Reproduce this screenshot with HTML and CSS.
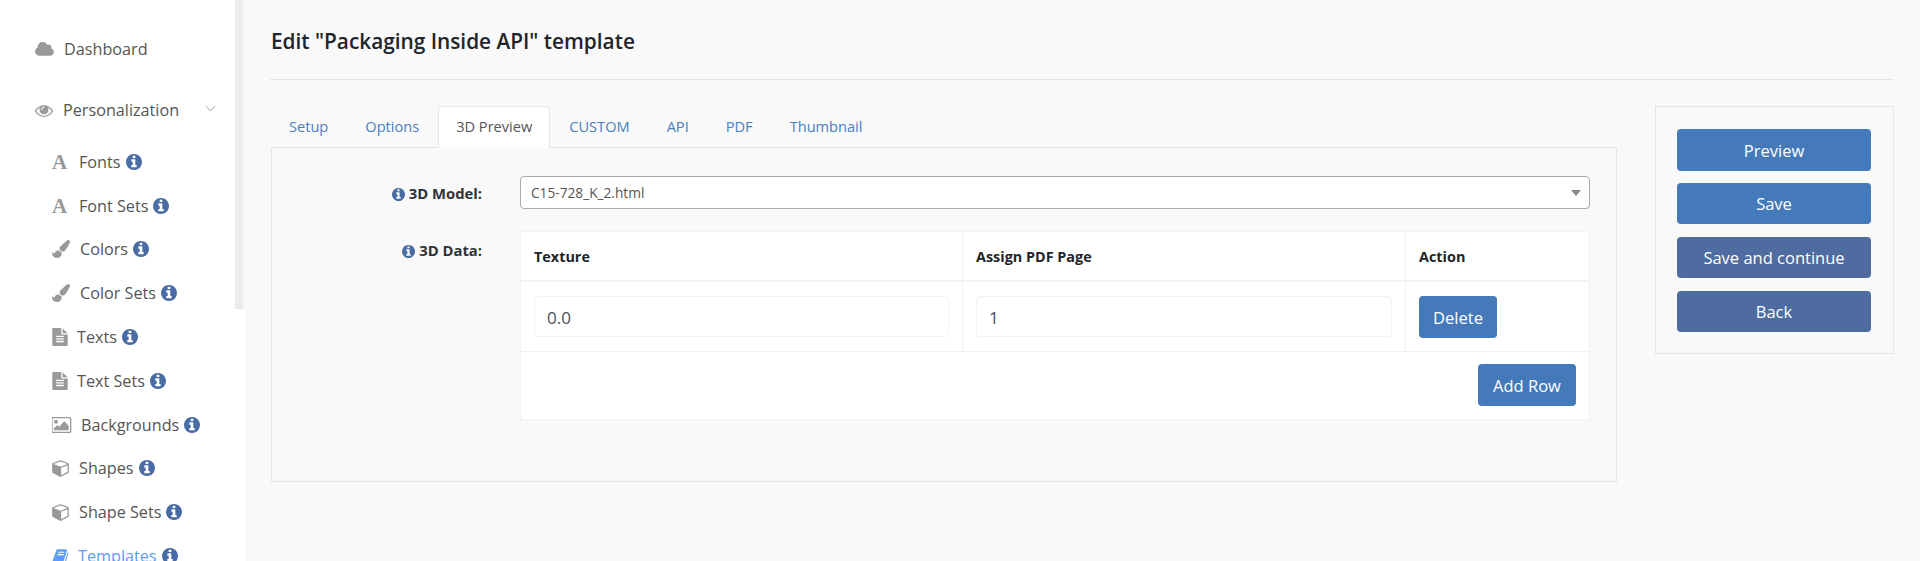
FILE: index.html
```html
<!DOCTYPE html>
<html lang="en">
<head>
<meta charset="utf-8">
<title>Edit template</title>
<link rel="stylesheet" href="styles.css">
</head>
<body>
<svg class="defs" width="0" height="0" aria-hidden="true">
  <symbol id="i-cloud" viewBox="0 128 1920 1536"><path d="M1920 1152q0 159-112.5 271.5t-271.5 112.5h-1088q-185 0-316.5-131.5t-131.5-316.5q0-132 71-241.5t187-163.5q-2-28-2-43 0-212 150-362t362-150q158 0 286.5 88t187.5 230q70-62 166-62 106 0 181 75t75 181q0 75-41 138 129 30 213 134.5t84 239.5z"/></symbol>
  <symbol id="i-eye" viewBox="0 256 1792 1280"><path d="M1664 960q-152-236-381-353 61 104 61 225 0 185-131.5 316.5t-316.5 131.5-316.5-131.5-131.5-316.5q0-121 61-225-229 117-381 353 133 205 333.5 326.5t434.5 121.5 434.5-121.5 333.5-326.5zm-720-384q0-20-14-34t-34-14q-125 0-214.5 89.5t-89.5 214.5q0 20 14 34t34 14 34-14 14-34q0-86 61-147t147-61q20 0 34-14t14-34zm848 384q0 34-20 69-140 230-376.5 368.5t-499.5 138.5-499.5-139-376.5-368q-20-35-20-69t20-69q140-229 376.5-368t499.5-139 499.5 139 376.5 368q20 35 20 69z"/></symbol>
  <symbol id="i-brush" viewBox="0 0 1792 1792"><path d="M1615 0q70 0 122.5 46.5t52.5 116.5q0 63-45 151-332 629-465 752-97 91-218 91-126 0-216.5-92.5t-90.5-219.5q0-128 92-212l638-579q59-54 130-54zm-909 1034q39 76 106.5 130t150.5 76l1 71q4 213-129.5 347t-348.5 134q-123 0-218-46.5t-152.5-127.5-86.5-183-29-220q7 5 41 30t62 44.5 59 36.5 46 17q41 0 55-37 25-66 57.5-112.5t69.5-76 88-47.5 103-25.5 125-10.5z"/></symbol>
  <symbol id="i-file" viewBox="128 0 1536 1792"><path d="M1596 476q14 14 28 36h-472v-472q22 14 36 28zm-476 164h544v1056q0 40-28 68t-68 28h-1344q-40 0-68-28t-28-68v-1600q0-40 28-68t68-28h800v544q0 40 28 68t68 28zm160 736v-64q0-14-9-23t-23-9h-704q-14 0-23 9t-9 23v64q0 14 9 23t23 9h704q14 0 23-9t9-23zm0-256v-64q0-14-9-23t-23-9h-704q-14 0-23 9t-9 23v64q0 14 9 23t23 9h704q14 0 23-9t9-23zm0-256v-64q0-14-9-23t-23-9h-704q-14 0-23 9t-9 23v64q0 14 9 23t23 9h704q14 0 23-9t9-23z"/></symbol>
  <symbol id="i-picture" viewBox="0 128 1920 1536"><path d="M576 576q0 80-56 136t-136 56-136-56-56-136 56-136 136-56 136 56 56 136zm1024 384v448h-1408v-192l320-320 160 160 512-512zm96-704h-1600q-13 0-22.5 9.5t-9.5 22.5v1216q0 13 9.5 22.5t22.5 9.5h1600q13 0 22.5-9.5t9.5-22.5v-1216q0-13-9.5-22.5t-22.5-9.5zm160 32v1216q0 66-47 113t-113 47h-1600q-66 0-113-47t-47-113v-1216q0-66 47-113t113-47h1600q66 0 113 47t47 113z"/></symbol>
  <symbol id="i-cube" viewBox="0 0 1664 1792"><path d="M896 1629l640-349v-636l-640 233v752zm-64-865l698-254-698-254-698 254zm832-252v768q0 35-18 65t-49 47l-704 384q-28 16-61 16t-61-16l-704-384q-31-17-49-47t-18-65v-768q0-40 23-73t61-49l704-256q22-8 44-8t44 8l704 256q38 16 61 49t23 73z"/></symbol>
  <symbol id="i-book" viewBox="0 128 1792 1536"><path d="M1703 478q40 57 18 129l-275 906q-19 64-76.500 107.500t-122.500 43.500h-923q-77 0-148.500-53.500t-99.500-131.500q-24-67-2-127 0-4 3-27t4-37q1-8-3-21.500t-3-19.500q2-11 8-21t16.500-23.500 16.500-23.500q23-38 45-91.500t30-91.500q3-10 .5-30t-.5-28q3-11 17-28t17-23q21-36 42-92t25-90q1-9-2.500-32t.5-28q4-13 22-30.500t22-22.500q19-26 42.500-84.500t27.500-96.500q1-8-3-25.500t-2-26.500q2-8 9-18t18-23 17-21q8-12 16.500-30.500t15-35 16-36 19.500-32 26.500-23.500 36-11.500 47.500 5.500l-1 3q38-9 51-9h761q74 0 114 56t18 130l-274 906q-36 119-71.500 153.500t-128.500 34.500h-869q-27 0-38 15-11 16-1 43 24 70 144 70h923q29 0 56-15.500t35-41.500l300-987q7-22 5-57 38 15 59 43zm-1064 2q-4 13 2 22.500t20 9.500h608q13 0 25.500-9.500t16.500-22.500l21-64q4-13-2-22.500t-20-9.500h-608q-13 0-25.500 9.500t-16.500 22.500zm-83 256q-4 13 2 22.500t20 9.500h608q13 0 25.500-9.500t16.500-22.500l21-64q4-13-2-22.500t-20-9.500h-608q-13 0-25.500 9.500t-16.500 22.500z"/></symbol>
  <symbol id="i-info" viewBox="128 128 1536 1536"><path d="M1152 1376v-160q0-14-9-23t-23-9h-96v-512q0-14-9-23t-23-9h-320q-14 0-23 9t-9 23v160q0 14 9 23t23 9h96v320h-96q-14 0-23 9t-9 23v160q0 14 9 23t23 9h448q14 0 23-9t9-23zm-128-896v-160q0-14-9-23t-23-9h-192q-14 0-23 9t-9 23v160q0 14 9 23t23 9h192q14 0 23-9t9-23zm640 416q0 209-103 385.500t-279.500 279.500-385.500 103-385.500-103-279.500-279.500-103-385.500 103-385.500 279.500-279.500 385.500-103 385.500 103 279.500 279.500 103 385.500z"/></symbol>
</svg>

<aside class="sidebar">
  <div class="scroll-thumb"></div>
  <a class="top-item first"><svg class="ico ico-cloud"><use href="#i-cloud"/></svg><span class="lbl-dash">Dashboard</span></a>
  <a class="top-item"><svg class="ico ico-eye"><use href="#i-eye"/></svg><span class="lbl-pers">Personalization</span>
    <svg class="chev" viewBox="0 0 12 7"><path d="M1 1l5 5 5-5"/></svg></a>
  <ul class="sub">
    <li><span class="ico ico-a">A</span><span class="t1">Fonts</span><svg class="info"><use href="#i-info"/></svg></li>
    <li><span class="ico ico-a">A</span><span class="t1">Font Sets</span><svg class="info"><use href="#i-info"/></svg></li>
    <li><svg class="ico ico-brush"><use href="#i-brush"/></svg><span class="t2">Colors</span><svg class="info"><use href="#i-info"/></svg></li>
    <li><svg class="ico ico-brush"><use href="#i-brush"/></svg><span class="t2">Color Sets</span><svg class="info"><use href="#i-info"/></svg></li>
    <li><svg class="ico ico-file"><use href="#i-file"/></svg><span class="t3">Texts</span><svg class="info"><use href="#i-info"/></svg></li>
    <li><svg class="ico ico-file"><use href="#i-file"/></svg><span class="t3">Text Sets</span><svg class="info"><use href="#i-info"/></svg></li>
    <li><svg class="ico ico-picture"><use href="#i-picture"/></svg><span class="t4">Backgrounds</span><svg class="info"><use href="#i-info"/></svg></li>
    <li><svg class="ico ico-cube"><use href="#i-cube"/></svg><span class="t2">Shapes</span><svg class="info"><use href="#i-info"/></svg></li>
    <li><svg class="ico ico-cube"><use href="#i-cube"/></svg><span class="t2">Shape Sets</span><svg class="info"><use href="#i-info"/></svg></li>
    <li class="active"><svg class="ico ico-book"><use href="#i-book"/></svg><span class="t2">Templates</span><svg class="info"><use href="#i-info"/></svg></li>
  </ul>
</aside>

<main class="main">
  <header class="page-head"><h1>Edit "Packaging Inside API" template</h1></header>
  <div class="columns">
    <section class="editor">
      <nav class="tabs">
        <a class="tab">Setup</a>
        <a class="tab">Options</a>
        <a class="tab active">3D Preview</a>
        <a class="tab">CUSTOM</a>
        <a class="tab">API</a>
        <a class="tab">PDF</a>
        <a class="tab">Thumbnail</a>
      </nav>
      <div class="tab-pane">
        <div class="form-row row-model">
          <label class="form-label"><svg class="info small"><use href="#i-info"/></svg>3D Model:</label>
          <div class="select-wrap">
            <select class="select"><option>C15-728_K_2.html</option></select>
          </div>
        </div>
        <div class="form-row row-data">
          <label class="form-label"><svg class="info small"><use href="#i-info"/></svg>3D Data:</label>
          <div class="data-table">
            <div class="grid head">
              <div class="cell c1">Texture</div>
              <div class="cell c2">Assign PDF Page</div>
              <div class="cell c3">Action</div>
            </div>
            <div class="grid body">
              <div class="cell c1"><input class="input" value="0.0"></div>
              <div class="cell c2"><input class="input" value="1"></div>
              <div class="cell c3"><button class="btn btn-small">Delete</button></div>
            </div>
            <div class="table-foot"><button class="btn btn-add">Add Row</button></div>
          </div>
        </div>
      </div>
    </section>
    <aside class="actions">
      <button class="btn btn-act tall">Preview</button>
      <button class="btn btn-act">Save</button>
      <button class="btn btn-act dark">Save and continue</button>
      <button class="btn btn-act dark">Back</button>
    </aside>
  </div>
</main>
</body>
</html>
```
FILE: styles.css
```css
* { box-sizing: border-box; }
html, body { margin: 0; height: 100%; }
body {
  display: flex;
  height: 561px;
  overflow: hidden;
  background: #f9f9fa;
  font-family: "Open Sans", "Noto Sans", sans-serif;
  color: #495057;
}
.defs { position: absolute; }

/* Sidebar */
.sidebar {
  position: relative;
  flex: 0 0 245px;
  height: 561px;
  overflow: hidden;
  background: #fff;
  padding-left: 35px;
  font-size: 16.2px;
  color: #555;
}
.scroll-thumb {
  position: absolute;
  top: 0;
  right: 0;
  width: 10px;
  height: 309px;
  background: #ececec;
  border-right: 2px solid #f9f9fa;
}
.ico { fill: #999; flex: none; }
.top-item {
  display: flex;
  align-items: center;
  height: 22px;
  margin-top: 39px;
  position: relative;
}
.top-item.first { margin-top: 38px; }
.ico-cloud { width: 19px; height: 15px; margin-right: 10px; }
.ico-eye { width: 18px; height: 13px; margin-right: 10px; }
.lbl-dash, .lbl-pers { line-height: 22px; }
.chev { position: absolute; left: 170px; top: 6px; width: 11px; height: 7px; fill: none; stroke: #999; stroke-width: 1; }
.sub { list-style: none; margin: 19px 0 0; padding: 0 0 0 17px; }
.sub li {
  display: flex;
  align-items: center;
  height: 43.8px;
}
.sub li.active { color: #5b9cf5; }
.sub li.active .ico { fill: #5b9cf5; }
.ico-a { width: 17px; font: bold 21px/22px "Liberation Serif", serif; color: #999; margin-right: 10px; }
.ico-brush { width: 18px; height: 18px; margin-right: 10px; }
.ico-file { width: 16px; height: 18px; margin-right: 9px; }
.ico-picture { width: 20px; height: 16px; margin-right: 9px; }
.ico-cube { width: 17px; height: 18px; margin-right: 10px; }
.ico-book { width: 17px; height: 15px; margin-right: 9px; }
.info { width: 16px; height: 16px; fill: #4a6ca5; margin-left: 5px; flex: none; }
.info.small { width: 13px; height: 13px; margin: 0 4px 0 0; vertical-align: -2px; fill: #4a6ca5; }

/* Main */
.main { flex: 1; padding: 0 26px 0 25px; min-width: 0; }
.page-head { height: 80px; border-bottom: 1px solid #e2e4e9; padding-top: 27px; }
.page-head h1 { margin: 0 0 0 1px; font-size: 20.8px; line-height: 28px; font-weight: 600; color: #212529; }
.columns { display: flex; justify-content: space-between; align-items: flex-start; padding-top: 26px; }
.editor { width: 1347px; padding-left: 1px; }
.tabs { display: flex; height: 41px; }
.tab {
  padding: 0 17px;
  margin-right: 1px;
  line-height: 39px;
  font-size: 14.6px;
  color: #4a80bd;
  border: 1px solid transparent;
  border-bottom: 0;
  border-radius: 3px 3px 0 0;
}
.tab.active {
  background: #fff;
  border-color: #e2e5ec;
  color: #555;
  height: 42px;
  position: relative;
  z-index: 1;
}
.tab-pane {
  height: 335px;
  border: 1px solid #e2e5ec;
  padding: 28px 26px 0 0;
}
.form-row { display: flex; }
.form-label {
  flex: 0 0 210px;
  margin-right: 38px;
  text-align: right;
  font-size: 14.8px;
  font-weight: 700;
  color: #2f3237;
}
.row-model { align-items: center; height: 33px; margin-bottom: 22px; }
.row-data .form-label { line-height: 20px; padding-top: 9px; }
.select-wrap { position: relative; flex: 1; }
.select-wrap::after {
  content: "";
  position: absolute;
  right: 9px;
  top: 14px;
  border: 5px solid transparent;
  border-top: 6px solid #888;
  border-bottom: 0;
}
.select {
  display: block;
  width: 100%;
  height: 33px;
  padding: 0 10px;
  appearance: none;
  background: #fff;
  border: 1px solid #aaa;
  border-radius: 4px;
  font: 13.7px "Open Sans", sans-serif;
  color: #555;
}
.data-table { flex: 1; background: #fff; border: 1px solid #f2f2f2; }
.grid { display: grid; grid-template-columns: 441px 443px 1fr; }
.cell { padding-left: 13px; }
.cell + .cell { border-left: 1px solid #f2f2f2; }
.head { height: 50px; border-bottom: 2px solid #f2f2f2; }
.head .cell { font-size: 14.4px; font-weight: 700; color: #212529; line-height: 50px; }
.body { height: 70px; border-bottom: 1px solid #f2f2f2; }
.body .cell { padding-top: 14px; padding-right: 13px; }
.input {
  display: block;
  width: 100%;
  height: 41px;
  padding: 2px 12px 0;
  border: 1px solid #f2f2f2;
  border-radius: 4px;
  background: #fff;
  font: 17px "Open Sans", sans-serif;
  color: #495057;
}
.btn {
  display: block;
  border: 0;
  border-radius: 4px;
  background: #447ab9;
  color: #fff;
  font: 16.5px "Open Sans", sans-serif;
  padding: 0;
}
.btn-small { width: 78px; height: 42px; }
.table-foot { display: flex; justify-content: flex-end; padding: 12px 13px 13px 0; }
.btn-add { width: 98px; height: 42px; }
.actions {
  width: 239px;
  height: 248px;
  border: 1px solid #e2e5ec;
  padding: 22px 22px 0 21px;
  display: flex;
  flex-direction: column;
}
.btn-act { width: 100%; height: 41px; flex: none; margin-bottom: 13px; }
.btn-act.tall { height: 42px; margin-bottom: 12px; }
.btn-act.dark { background: #4e6ca0; }
```
